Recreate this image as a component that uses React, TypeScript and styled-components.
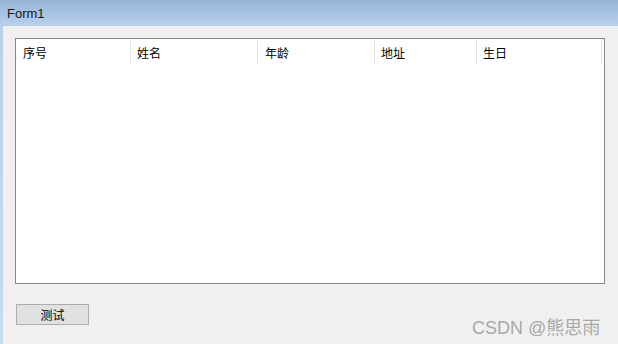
import React from "react";
import styled, { createGlobalStyle } from "styled-components";

const Global = createGlobalStyle`
  html, body { margin: 0; padding: 0; background: #f0f0f0; }
  body { font-family: "Noto Sans CJK SC", "Liberation Sans", sans-serif; }
`;

const Window = styled.div`
  position: relative;
  width: 618px;
  height: 344px;
  display: flex;
  flex-direction: column;
  overflow: hidden;
`;

const TitleBar = styled.div`
  height: 26px;
  flex: none;
  display: flex;
  align-items: center;
  padding-left: 7px;
  background: linear-gradient(to bottom, #97b4d8 0%, #a7c2e2 50%, #b8d0eb 100%);
  font-family: "Liberation Sans", "Noto Sans CJK SC", sans-serif;
  font-size: 13px;
  color: #201810;
`;

const Body = styled.div`
  flex: 1;
  display: flex;
`;

const Frame = styled.div`
  width: 3px;
  flex: none;
  background: linear-gradient(to bottom, #b9d1ea, #c6dbf0);
`;

const Client = styled.div`
  flex: 1;
  background: #f0f0f0;
  display: flex;
  flex-direction: column;
  padding: 12px 0 0 12px;
`;

const ListView = styled.div`
  width: 588px;
  height: 244px;
  border: 1px solid #828790;
  background: #ffffff;
`;

const Header = styled.div`
  display: flex;
  height: 25px;
  padding-top: 1px;
  box-sizing: border-box;
`;

const Col = styled.div<{ $w: number; $pad: number }>`
  width: ${(p) => p.$w}px;
  flex: none;
  box-sizing: border-box;
  padding-left: ${(p) => p.$pad}px;
  display: flex;
  align-items: center;
  font-size: 12px;
  color: #000;
  border-right: 1px solid #e5e5e5;
  height: 24px;
`;

const Button = styled.button`
  margin: 20px 0 0 1px;
  width: 73px;
  height: 21px;
  padding: 0;
  border: 1px solid #adadad;
  background: #e1e1e1;
  font-family: "Noto Sans CJK SC", sans-serif;
  font-size: 12px;
  color: #000;
  display: flex;
  align-items: center;
  justify-content: center;
`;

const Watermark = styled.div`
  position: absolute;
  left: 472px;
  top: 313px;
  font-family: "Liberation Sans", "Noto Sans CJK SC", sans-serif;
  font-size: 18px;
  color: #a8a8a8;
`;

const cols: [string, number, number][] = [
  ["序号", 115, 7],
  ["姓名", 127, 6],
  ["年龄", 117, 7],
  ["地址", 102, 6],
  ["生日", 125, 6],
];

export default function App() {
  return (
    <>
      <Global />
      <Window>
        <TitleBar>Form1</TitleBar>
        <Body>
          <Frame />
          <Client>
            <ListView>
              <Header>
                {cols.map(([t, w, p]) => (
                  <Col key={t} $w={w} $pad={p}>
                    {t}
                  </Col>
                ))}
              </Header>
            </ListView>
            <Button>测试</Button>
          </Client>
        </Body>
        <Watermark>CSDN @熊思雨</Watermark>
      </Window>
    </>
  );
}
